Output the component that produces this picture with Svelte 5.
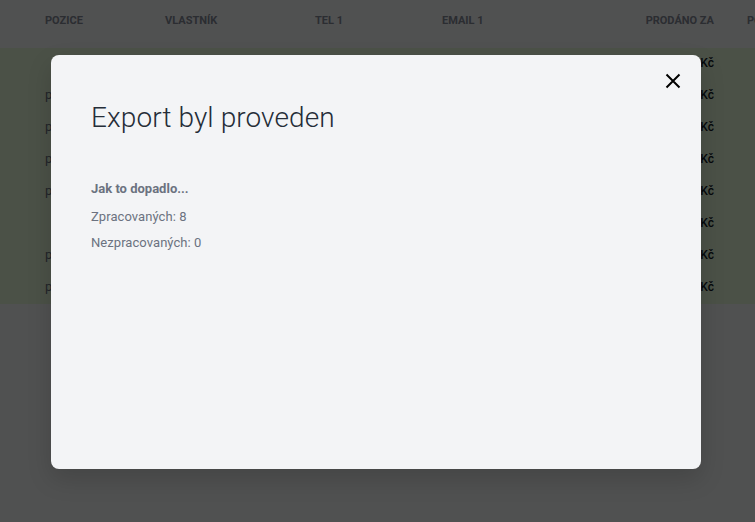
<script>
  const columns = ["Pozice", "Vlastník", "Tel 1", "Email 1", "Prodáno za", "Po"];

  const rows = [
    { position: "", price: "12 900 Kč" },
    { position: "prodejce", price: "8 400 Kč" },
    { position: "prodejce", price: "15 200 Kč" },
    { position: "prodejce", price: "9 900 Kč" },
    { position: "prodejce", price: "21 000 Kč" },
    { position: "", price: "6 700 Kč" },
    { position: "prodejce", price: "11 300 Kč" },
    { position: "prodejce", price: "7 800 Kč" },
  ];
</script>

<div class="page">
  <div class="table">
    <div class="row head">
      {#each columns as col}
        <div class="cell">{col}</div>
      {/each}
    </div>
    {#each rows as row}
      <div class="row item">
        <div class="cell muted">{row.position}</div>
        <div class="cell"></div>
        <div class="cell"></div>
        <div class="cell"></div>
        <div class="cell price">{row.price}</div>
        <div class="cell"></div>
      </div>
    {/each}
  </div>

  <div class="overlay">
    <div class="modal">
      <button class="close" aria-label="Zavřít">
        <svg viewBox="0 0 16 16" width="16" height="16">
          <path d="M1.5 1.5 L14.5 14.5 M14.5 1.5 L1.5 14.5" stroke="#000" stroke-width="2" fill="none" />
        </svg>
      </button>
      <h2>Export byl proveden</h2>
      <p class="lead">Jak to dopadlo...</p>
      <p>Zpracovaných: 8</p>
      <p>Nezpracovaných: 0</p>
    </div>
  </div>
</div>

<style>
  :global(body) {
    margin: 0;
    overflow: hidden;
    background: #f9fafb;
    font-family: Roboto, "Liberation Sans", sans-serif;
  }

  .page {
    position: relative;
    width: 755px;
    height: 522px;
    overflow: hidden;
  }

  .row {
    display: grid;
    grid-template-columns: 120px 150px 127px 204px 68px 1fr;
    padding-left: 45px;
  }

  .head {
    height: 48px;
    align-items: center;
    box-sizing: border-box;
    padding-bottom: 8px;
    font-size: 11px;
    font-weight: 700;
    text-transform: uppercase;
    color: #858b98;
    white-space: nowrap;
  }

  .head .cell:nth-child(5) {
    justify-self: end;
  }

  .head .cell:nth-child(6) {
    padding-left: 33px;
  }

  .item {
    height: 32px;
    align-items: center;
    box-sizing: border-box;
    padding-bottom: 3px;
    background: #e9fcdb;
    font-size: 12px;
    font-weight: 500;
    color: #111827;
    white-space: nowrap;
  }

  .muted {
    color: #6b7280;
    font-size: 13px;
    font-weight: 400;
  }

  .price {
    justify-self: end;
  }

  .overlay {
    position: absolute;
    inset: 0;
    background: rgba(0, 0, 0, 0.68);
  }

  .modal {
    position: absolute;
    left: 51px;
    top: 55px;
    width: 650px;
    height: 414px;
    box-sizing: border-box;
    padding: 45px 40px;
    background: #f3f4f6;
    border-radius: 8px;
    box-shadow: 0 10px 25px rgba(0, 0, 0, 0.15);
  }

  .close {
    position: absolute;
    top: 18px;
    right: 20px;
    width: 16px;
    height: 16px;
    padding: 0;
    border: none;
    background: none;
    display: flex;
  }

  h2 {
    margin: 0 0 44px;
    font-size: 28px;
    line-height: 36px;
    font-weight: 300;
    letter-spacing: 0.1px;
    color: #252d38;
  }

  p {
    margin: 0 0 8px;
    font-size: 13px;
    line-height: 18px;
    letter-spacing: 0.06px;
    color: #6b7280;
  }

  .lead {
    font-weight: 700;
    letter-spacing: 0;
    margin-bottom: 10px;
  }
</style>
